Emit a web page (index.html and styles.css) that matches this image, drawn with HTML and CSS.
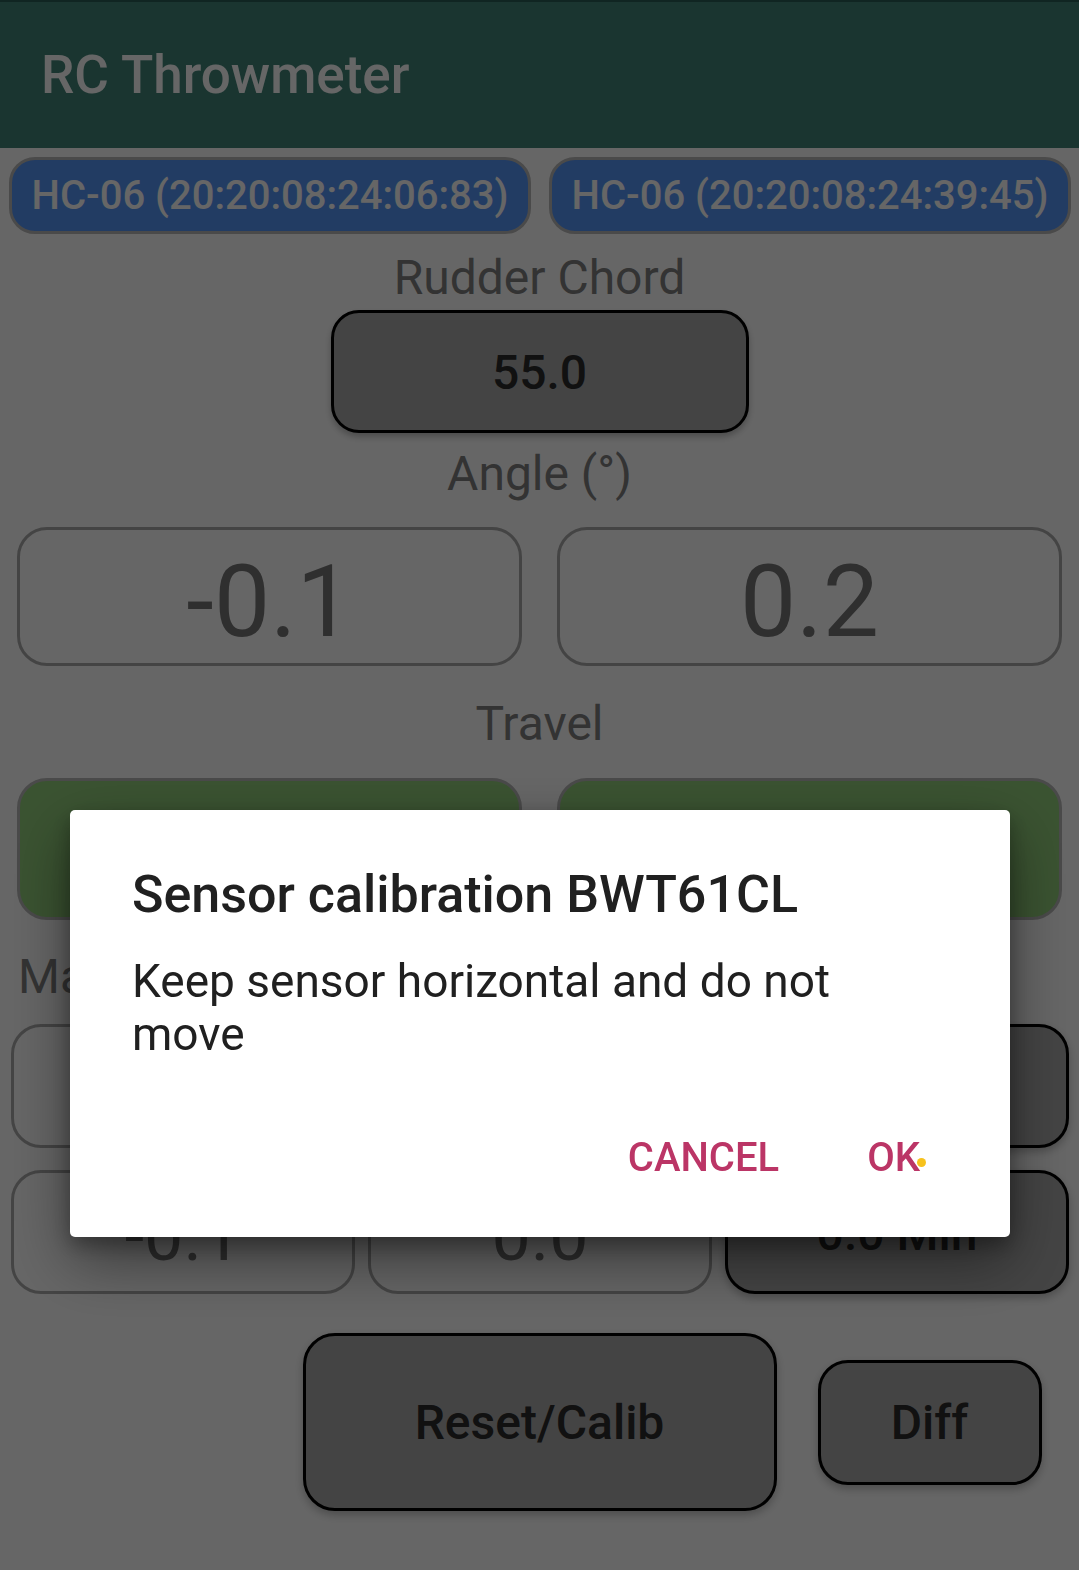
FILE: index.html
```html
<!DOCTYPE html>
<html lang="en">
<head>
<meta charset="utf-8">
<title>RC Throwmeter</title>
<link rel="stylesheet" href="styles.css">
</head>
<body>
<header class="appbar">
  <h1 class="app-title">RC Throwmeter</h1>
</header>
<main class="content">
  <div class="devices">
    <button class="device">HC-06 (20:20:08:24:06:83)</button>
    <button class="device">HC-06 (20:20:08:24:39:45)</button>
  </div>
  <div class="label label-chord">Rudder Chord</div>
  <div class="chord">55.0</div>
  <div class="label label-angle">Angle (°)</div>
  <div class="pair pair-angle">
    <div class="value-box">-0.1</div>
    <div class="value-box">0.2</div>
  </div>
  <div class="label label-travel">Travel</div>
  <div class="pair pair-travel">
    <div class="travel-box"></div>
    <div class="travel-box"></div>
  </div>
  <div class="label label-max">Max</div>
  <div class="triple triple-max">
    <div class="cell"></div>
    <div class="cell"></div>
    <div class="cell cell-dark"></div>
  </div>
  <div class="triple triple-min">
    <div class="cell">-0.1</div>
    <div class="cell">0.0</div>
    <div class="cell cell-dark">0.0 Min</div>
  </div>
  <div class="actions">
    <button class="action action-reset">Reset/Calib</button>
    <button class="action action-diff">Diff</button>
  </div>
</main>
<div class="scrim"></div>
<div class="dialog" role="dialog">
  <h2 class="dialog-title">Sensor calibration BWT61CL</h2>
  <p class="dialog-body">Keep sensor horizontal and do not<br>move</p>
  <div class="dialog-actions">
    <button class="dialog-btn">CANCEL</button>
    <button class="dialog-btn dialog-ok">OK<span class="touch-dot"></span></button>
  </div>
</div>
</body>
</html>
```
FILE: styles.css
```css
* { box-sizing: border-box; }

html, body {
  margin: 0;
  padding: 0;
  background: #ffffff;
  font-family: "Roboto", "Liberation Sans", sans-serif;
}

body {
  width: 1079px;
  height: 1570px;
  overflow: hidden;
  position: relative;
}

button {
  font-family: inherit;
  cursor: pointer;
}

/* App bar */
.appbar {
  height: 148px;
  background: #418478;
  border-top: 2px solid #2a5e55;
  display: flex;
  align-items: center;
  padding-left: 41px;
}

.app-title {
  margin: 0;
  font-size: 53px;
  font-weight: 500;
  color: #ffffff;
  line-height: 62px;
}

/* Content */
.content {
  display: flex;
  flex-direction: column;
}

.devices {
  display: grid;
  grid-template-columns: 1fr 1fr;
  gap: 18px;
  padding: 9px 8px 0 9px;
}

.device {
  height: 77px;
  border: 3px solid #b9b9b9;
  border-radius: 26px;
  background: #5596f8;
  color: #ffffff;
  font-size: 40px;
  font-weight: 500;
  padding: 0;
  white-space: nowrap;
}

.label {
  font-size: 48px;
  line-height: 56px;
  height: 56px;
  color: #808080;
  text-align: center;
}

.label-chord { margin-top: 16px; }
.label-angle { margin-top: 13px; }
.label-travel { margin-top: 30px; }
.label-max {
  margin-top: 29px;
  text-align: left;
  padding-left: 18px;
}

.chord {
  margin: 4px auto 0;
  width: 418px;
  height: 123px;
  border: 3px solid #000000;
  border-radius: 28px;
  background: #aaaaaa;
  display: flex;
  align-items: center;
  justify-content: center;
  padding-top: 2px;
  font-size: 48px;
  font-weight: 500;
  color: #2b2b2b;
  box-shadow: 0 4px 6px rgba(0,0,0,0.25);
}

.pair {
  display: grid;
  grid-template-columns: 1fr 1fr;
  gap: 35px;
  padding: 0 17px 0 17px;
}

.pair-angle { margin-top: 25px; }
.pair-travel { margin-top: 26px; }

.value-box {
  height: 139px;
  border: 3px solid #ababab;
  border-radius: 30px;
  display: flex;
  align-items: center;
  justify-content: center;
  padding-top: 10px;
  font-size: 100px;
  color: #777777;
}

.travel-box {
  height: 142px;
  border: 3px solid #b9b9b9;
  border-radius: 30px;
  background: #92cf7b;
}

.triple {
  display: grid;
  grid-template-columns: repeat(3, 1fr);
  gap: 13px;
  padding: 0 10px 0 11px;
}

.triple-max { margin-top: 19px; }
.triple-min { margin-top: 22px; }

.cell {
  height: 124px;
  border: 3px solid #ababab;
  border-radius: 30px;
  display: flex;
  align-items: center;
  justify-content: center;
  padding-top: 8px;
  font-size: 70px;
  color: #777777;
}

.cell-dark {
  border-color: #000000;
  background: #aaaaaa;
  font-size: 48px;
  font-weight: 500;
  padding-top: 2px;
  color: #2b2b2b;
  box-shadow: 0 4px 8px rgba(0,0,0,0.25);
}

.actions {
  display: grid;
  grid-template-columns: 1fr 474px 1fr;
  align-items: center;
  margin-top: 39px;
}

.action {
  border: 3px solid #000000;
  background: #aaaaaa;
  color: #2b2b2b;
  font-size: 48px;
  font-weight: 500;
  padding: 0;
  box-shadow: 0 4px 8px rgba(0,0,0,0.25);
}

.action-reset {
  grid-column: 2;
  height: 178px;
  border-radius: 32px;
}

.action-diff {
  grid-column: 3;
  justify-self: start;
  margin-left: 41px;
  width: 224px;
  height: 125px;
  border-radius: 30px;
}

/* Scrim + dialog */
.scrim {
  position: fixed;
  inset: 0;
  background: rgba(0, 0, 0, 0.6);
}

.dialog {
  position: fixed;
  left: 70px;
  top: 810px;
  width: 940px;
  height: 427px;
  background: #ffffff;
  border-radius: 5px;
  box-shadow: 0 24px 60px rgba(0,0,0,0.45), 0 8px 20px rgba(0,0,0,0.3);
  padding: 54px 90px 0 62px;
}

.dialog-title {
  margin: 0;
  font-size: 52px;
  font-weight: 500;
  line-height: 61px;
  color: #202020;
}

.dialog-body {
  margin: 30px 0 0;
  font-size: 46px;
  line-height: 53px;
  color: #202020;
}

.dialog-actions {
  display: flex;
  justify-content: flex-end;
  gap: 88px;
  margin-top: 73px;
}

.dialog-btn {
  border: 0;
  background: transparent;
  padding: 0;
  font-size: 40px;
  font-weight: 500;
  line-height: 47px;
  color: #bb3566;
}

.dialog-ok {
  position: relative;
}

.touch-dot {
  position: absolute;
  right: -6px;
  top: 24px;
  width: 9px;
  height: 9px;
  border-radius: 50%;
  background: #f7c21d;
}
```
